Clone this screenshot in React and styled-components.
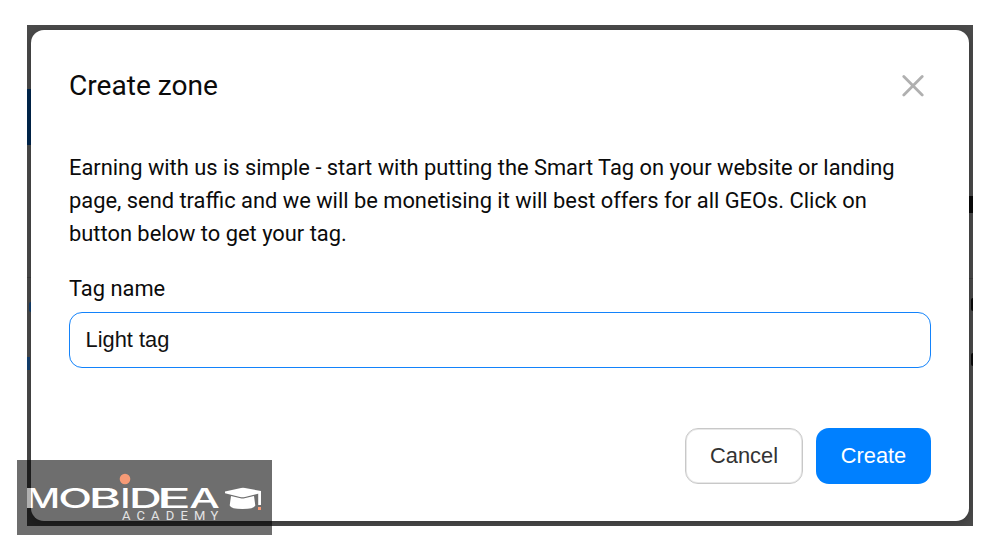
import React, { useState } from 'react';
import styled, { createGlobalStyle } from 'styled-components';

const GlobalStyle = createGlobalStyle`
  * {
    box-sizing: border-box;
  }

  body {
    margin: 0;
    background: #fff;
    color: #0b0b0b;
    font-family: Roboto, 'Liberation Sans', sans-serif;
  }
`;

const Page = styled.main`
  position: relative;
  width: 1005px;
  height: 552px;
  padding: 25px 32px 26px 27px;
  overflow: hidden;
`;

const Backdrop = styled.div`
  position: relative;
  display: flex;
  height: 501px;
  padding: 5px 4px;
  overflow: hidden;
  background: #4a4a4a;
`;

const Sliver = styled.span`
  position: absolute;
  left: ${({ $left }) => $left}px;
  top: ${({ $top }) => $top}px;
  width: ${({ $width }) => $width || 4}px;
  height: ${({ $height }) => $height}px;
  background: ${({ $color }) => $color};
  border-radius: ${({ $round }) => ($round ? '4px 0 0 4px' : 0)};
`;

const Dialog = styled.section`
  position: relative;
  display: flex;
  flex-direction: column;
  width: 938px;
  height: 491px;
  padding: 38px 38px 37px;
  border-radius: 13px;
  background: #fff;
  box-shadow: 0 2px 8px rgba(0, 0, 0, 0.25);
`;

const Header = styled.header`
  display: flex;
  align-items: center;
  justify-content: space-between;
  height: 36px;
  padding-right: 7px;
`;

const Title = styled.h1`
  margin: 0;
  font-size: 28.1px;
  font-weight: 400;
  line-height: 36px;
`;

const CloseButton = styled.button`
  display: flex;
  padding: 0;
  border: 0;
  background: none;
  cursor: pointer;
`;

const Description = styled.p`
  margin: 47px 0 0;
  font-size: 21.87px;
  line-height: 33px;
`;

const Label = styled.label`
  margin-top: 25px;
  font-size: 21.87px;
  line-height: 27px;
`;

const Input = styled.input`
  flex-shrink: 0;
  width: 100%;
  height: 56px;
  margin-top: 10px;
  padding: 0 15.5px;
  border: 1px solid #1383fb;
  border-radius: 13px;
  outline: none;
  background: #fff;
  color: #111;
  font: 21.85px 'Liberation Sans', Arial, sans-serif;
`;

const Actions = styled.footer`
  display: flex;
  justify-content: flex-end;
  gap: 13px;
  margin-top: 60px;
`;

const Button = styled.button`
  width: ${({ $primary }) => ($primary ? 115 : 118)}px;
  height: 56px;
  padding: 0;
  border: ${({ $primary }) => ($primary ? '0' : '1px solid #c8c8c8')};
  border-radius: 13px;
  background: ${({ $primary }) => ($primary ? '#0080ff' : '#fff')};
  box-shadow: ${({ $primary }) => ($primary ? 'none' : 'inset 0 0 0 1px #e8e8e8')};
  color: ${({ $primary }) => ($primary ? '#fff' : '#333')};
  font: 21.85px 'Liberation Sans', Arial, sans-serif;
  cursor: pointer;
`;

const Watermark = styled.div`
  position: absolute;
  left: 17px;
  top: 460px;
  width: 255px;
  height: 75px;
  background: rgba(0, 0, 0, 0.57);
`;

const slivers = [
  { left: 0, top: 64, height: 56, color: '#00264d' },
  { left: 0, top: 252, height: 1, color: '#3d3d3d' },
  { left: 942, top: 171, height: 17, width: 4, color: '#0a0a0a' },
  { left: 942, top: 253, height: 1, color: '#3d3d3d' },
  { left: 944, top: 273, height: 13, width: 2, color: '#0a0a0a', round: true },
  { left: 944, top: 328, height: 13, width: 2, color: '#0a0a0a', round: true },
  { left: 2, top: 277, height: 10, width: 2, color: '#14406f', round: true },
  { left: 0, top: 332, height: 13, width: 3, color: '#14406f' },
];

// each letter of the wordmark is stretched to its own width
const wordmark = [
  { letter: 'M', x: 8.5, width: 34.6 },
  { letter: 'O', x: 41.3, width: 33.8 },
  { letter: 'B', x: 71.8, width: 32.4 },
  { letter: 'I', x: 103.2, width: 10.2 },
  { letter: 'D', x: 112.1, width: 32.8 },
  { letter: 'E', x: 139.8, width: 34.3 },
  { letter: 'A', x: 172.2, width: 30.6 },
];

const CloseIcon = () => (
  <svg width="22" height="22" viewBox="0 0 22 22" fill="none" aria-hidden="true">
    <path d="M1.8 1.6L20.2 20M20.2 1.6L1.8 20" stroke="#b0b0b0" strokeWidth="2.8" strokeLinecap="round" />
  </svg>
);

const AcademyLogo = () => (
  <svg width="255" height="75" viewBox="0 0 255 75" fill="#fff">
    {wordmark.map(({ letter, x, width }) => (
      <text
        key={x}
        x={x}
        y="47.8"
        textLength={width}
        lengthAdjust="spacingAndGlyphs"
        fontFamily="Inter, sans-serif"
        fontSize="27.5"
        fontWeight="500"
      >
        {letter}
      </text>
    ))}
    <rect x="10" y="28" width="4" height="20" fill="#b0b0b0" />
    <circle cx="108" cy="19" r="5.3" fill="#f59a76" />
    <text x="105 119.5 134 148.8 163.5 177 193.5" y="60" fontFamily="Roboto, sans-serif" fontSize="13" fill="#e4e4e4">
      ACADEMY
    </text>
    <path d="M208 31.5L224 28Q226 27.7 228 28L244 31V33L228 37Q225.5 37.5 223 37L208 33.3Z" />
    <path d="M214 36L223.5 38.3Q225.5 38.7 227.5 38.3L237 36L238.3 45.5Q237 49 225.5 49Q214 49 212.7 45.5Z" />
    <path d="M241.2 32L244 31V45H241.2Z" />
    <rect x="241" y="47" width="3" height="3" fill="#f59a76" />
  </svg>
);

const App = () => {
  const [tagName, setTagName] = useState('Light tag');

  return (
    <>
      <GlobalStyle />
      <Page>
        <Backdrop>
          {slivers.map((item, index) => (
            <Sliver
              key={index}
              $left={item.left}
              $top={item.top}
              $width={item.width}
              $height={item.height}
              $color={item.color}
              $round={item.round}
            />
          ))}
          <Dialog role="dialog" aria-labelledby="dialog-title">
            <Header>
              <Title id="dialog-title">Create zone</Title>
              <CloseButton aria-label="Close">
                <CloseIcon />
              </CloseButton>
            </Header>
            <Description>
              Earning with us is simple - start with putting the Smart Tag on your website or landing page, send
              traffic and we will be monetising it will best offers for all GEOs. Click on button below to get your tag.
            </Description>
            <Label htmlFor="tag-name">Tag name</Label>
            <Input id="tag-name" value={tagName} onChange={(e) => setTagName(e.target.value)} />
            <Actions>
              <Button>Cancel</Button>
              <Button $primary>Create</Button>
            </Actions>
          </Dialog>
        </Backdrop>
        <Watermark>
          <AcademyLogo />
        </Watermark>
      </Page>
    </>
  );
};

export default App;
